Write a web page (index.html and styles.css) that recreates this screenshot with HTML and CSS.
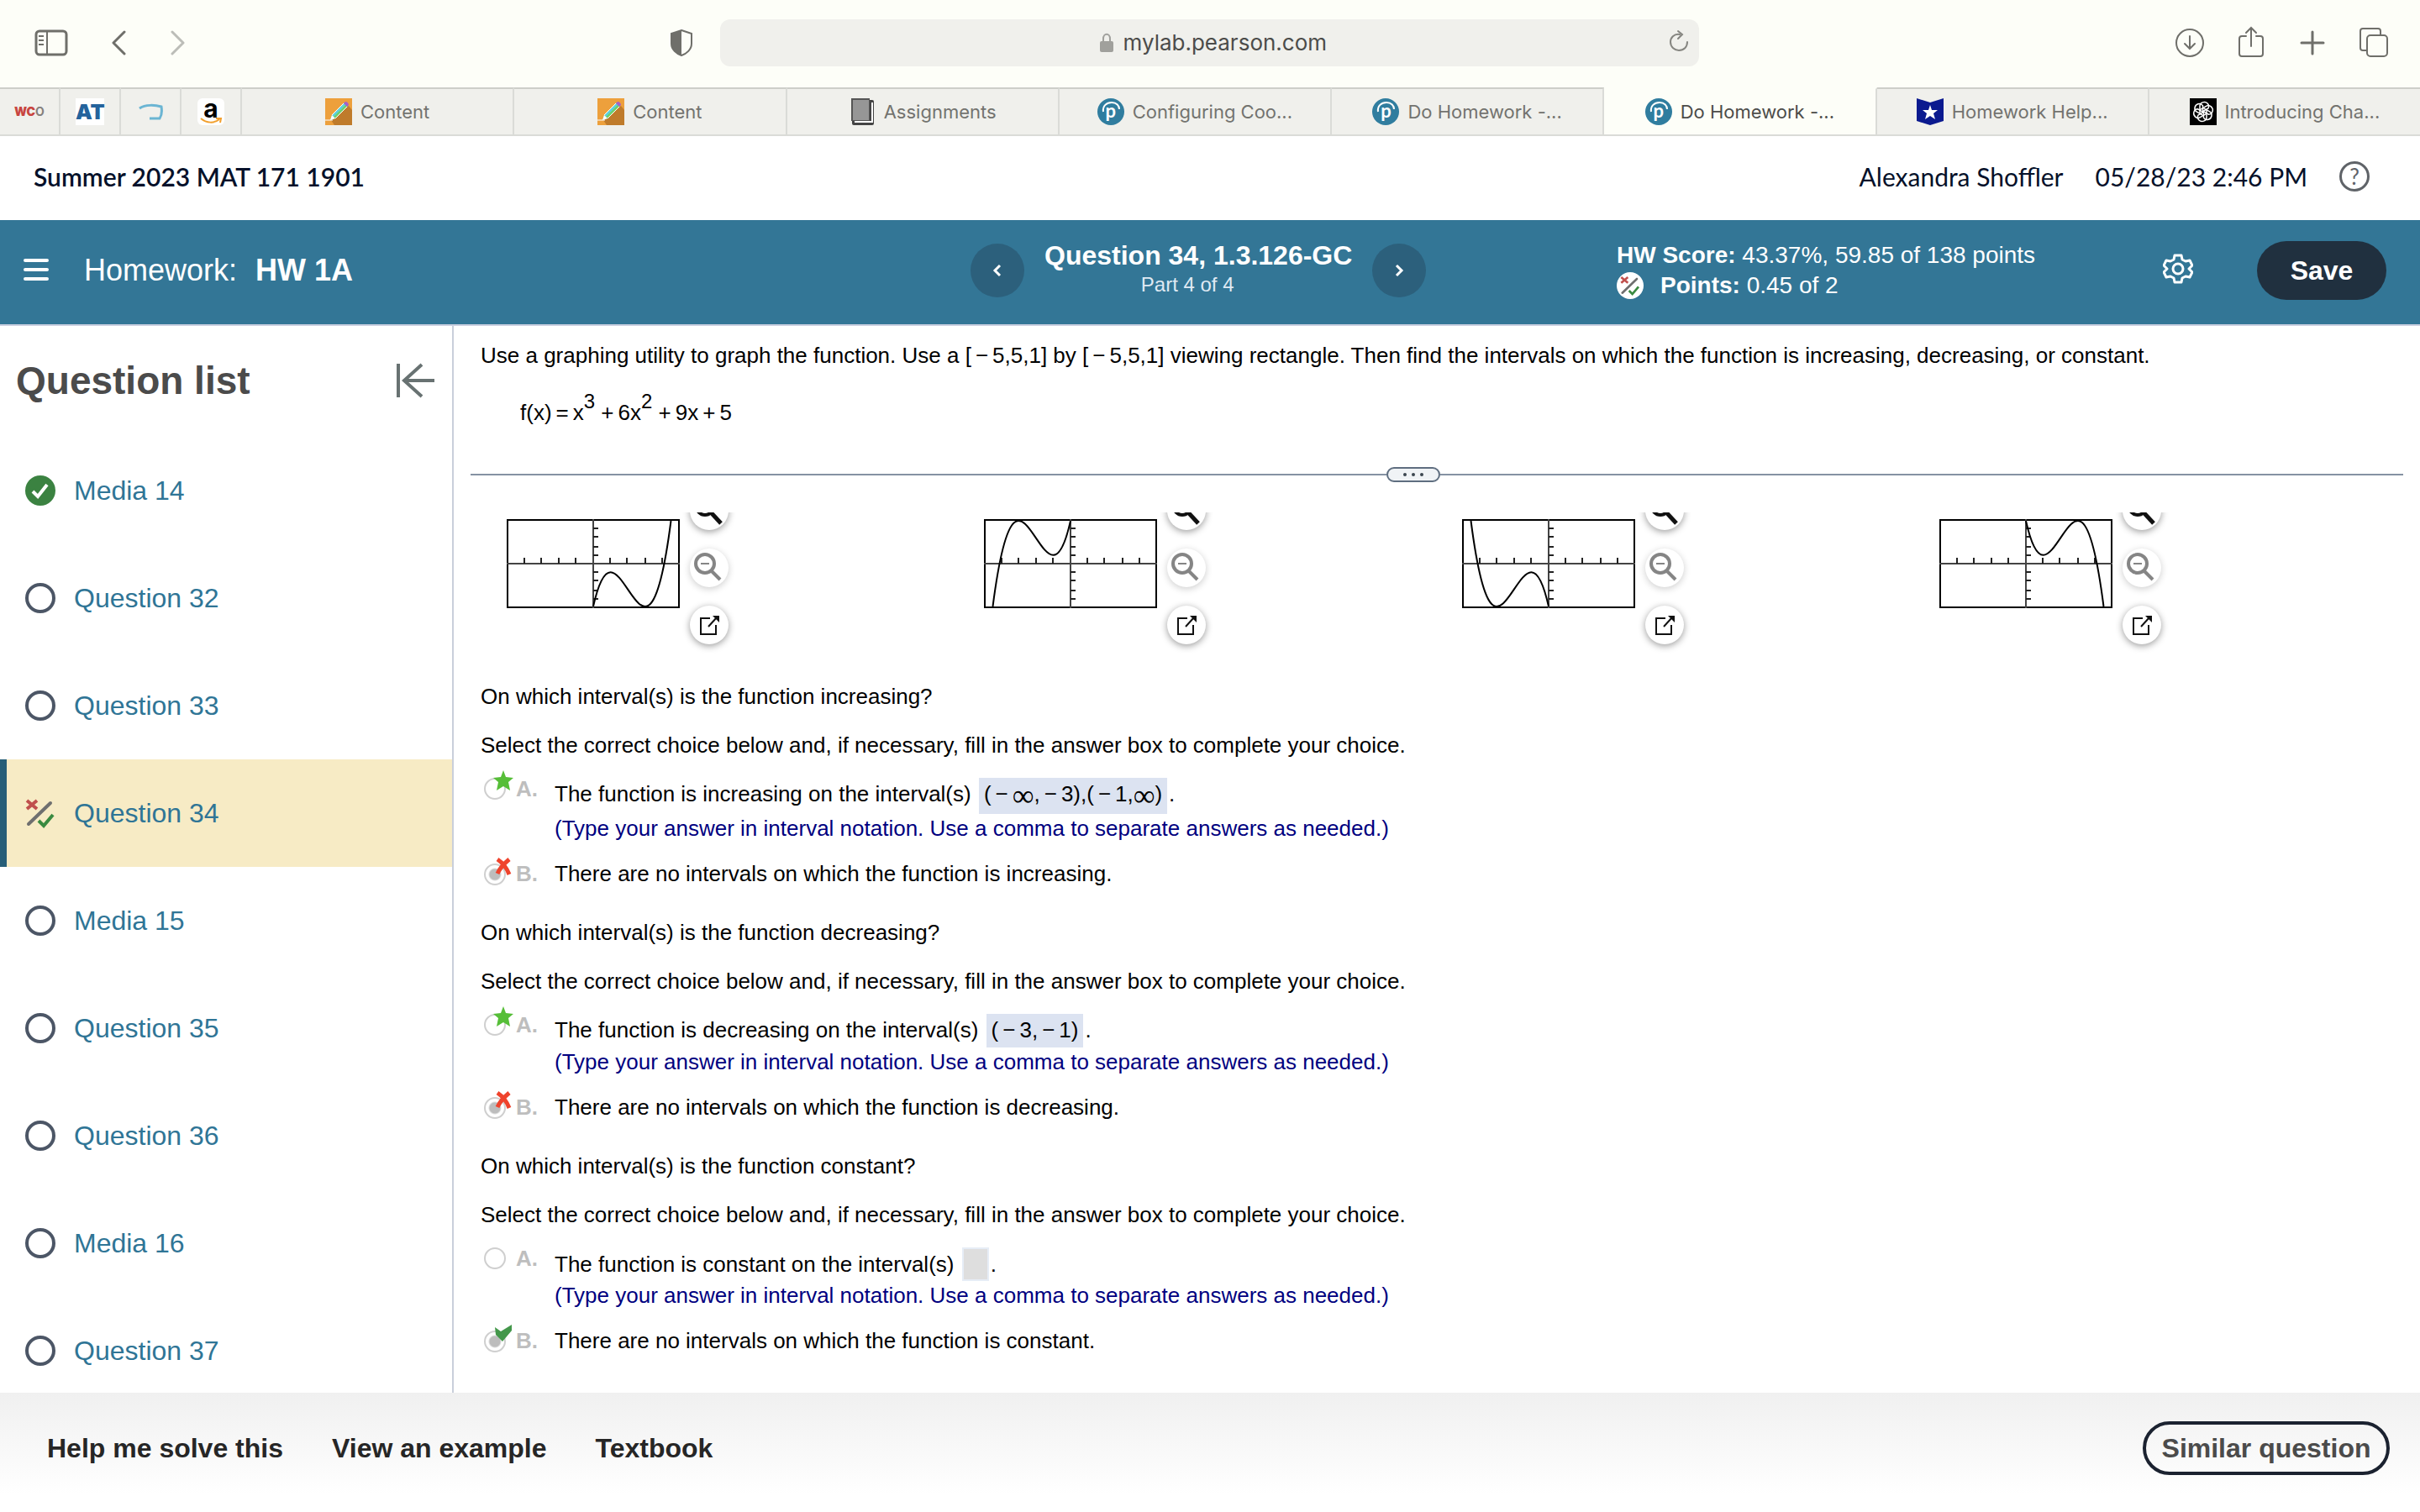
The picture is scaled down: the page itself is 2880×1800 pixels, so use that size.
FILE: index.html
```html
<!DOCTYPE html>
<html lang="en">
  <head>
    <meta charset="utf-8" />
    <title>Do Homework - HW 1A</title>
    <meta name="viewport" content="width=device-width, initial-scale=1.0" />
    <link rel="stylesheet" href="styles.css">
  </head>
  <body>
    <!-- Shared icons -->
    <svg class="sprite" aria-hidden="true">
      <symbol id="pencil" viewBox="0 0 32 32">
        <rect width="32" height="32" fill="#eda03c" />
        <path d="M7 26L28 9L32 14V32H11Z" fill="#bf7b2b" />
        <path d="M8 20L23 5L27 9L12 24L6 26Z" fill="#5fd0dc" />
        <path d="M10 22L25 7L27 9L12 24Z" fill="#6fd06c" />
        <path d="M8 20L12 24L6 26Z" fill="#fff" />
        <path d="M22 6L24 4C26 4 28 6 28 8L26 10Z" fill="#a560c8" />
        <path d="M8 20L22 6M12 24L26 10M0 26H9" stroke="#fff" stroke-width="1" />
      </symbol>
      <symbol id="arc" viewBox="0 0 32 32">
        <path d="M7 16C6 9 11 5 17 5C23 5 26 9 26 13" fill="none" stroke="#fff" stroke-width="2" />
      </symbol>
      <symbol id="partial" viewBox="0 0 36 36">
        <path d="M2 3L14 13M14 3L2 13" stroke="#c0504d" stroke-width="4" />
        <path d="M4 31L30 6" stroke="#6f6f6f" stroke-width="4" stroke-linecap="round" />
        <path d="M16 27L22 33L33 20" fill="none" stroke="#3a8a40" stroke-width="4" />
      </symbol>
      <symbol id="zoom-in" viewBox="0 0 46 46">
        <circle cx="18" cy="18" r="10" fill="none" stroke="#111" stroke-width="4" />
        <path d="M25 25L37 38" stroke="#111" stroke-width="5" />
        <path d="M13 18H23M18 13V23" stroke="#111" stroke-width="2" />
      </symbol>
      <symbol id="zoom-out" viewBox="0 0 46 46">
        <circle cx="18" cy="18" r="11" fill="none" stroke="#858585" stroke-width="4" />
        <path d="M25 26L36 37" stroke="#858585" stroke-width="4" />
        <path d="M13 18H23" stroke="#858585" stroke-width="2" />
      </symbol>
      <symbol id="pop-out" viewBox="0 0 46 46">
        <path d="M24 15H13V34H31V23" fill="none" stroke="#111" stroke-width="2" />
        <path d="M22 25L32 14" stroke="#111" stroke-width="2" />
        <path d="M27 12H35V20Z" fill="#111" />
      </symbol>
      <symbol id="axes" viewBox="0 0 206 106">
        <rect x="1" y="1" width="204" height="104" fill="none" stroke="#000" stroke-width="2" />
        <path d="M103 0V106M0 53H206" stroke="#444" stroke-width="2" />
        <path d="M21 46V53M41 46V53M62 46V53M82 46V53M123 46V53M143 46V53M165 46V53M185 46V53" stroke="#222" stroke-width="2" />
        <path d="M103 11H109M103 21H109M103 33H109M103 43H109M103 63H109M103 73H109M103 85H109M103 95H109" stroke="#222" stroke-width="2" />
      </symbol>
      <symbol id="star" viewBox="0 0 26 26">
        <path d="M13 1L16 9L25 10L19 15L21 25L13 20L5 25L7 15L1 10L10 9Z" fill="#56be38" />
      </symbol>
      <symbol id="wrong" viewBox="0 0 26 26">
        <path d="M6 4C12 8 17 14 20 22M20 4C14 9 9 14 6 21" fill="none" stroke="#ef432c" stroke-width="5" />
      </symbol>
      <symbol id="right" viewBox="0 0 26 26">
        <path d="M3 5L10 10L23 2V9L12 22L4 14Z" fill="#43974a" />
      </symbol>
    </svg>

    <!-- Browser toolbar -->
    <div class="toolbar">
      <div class="toolbar-left">
        <button class="tool" aria-label="Sidebar">
          <svg class="icon-panel" viewBox="0 0 40 32" fill="none" stroke="#6f6f6a" stroke-width="3">
            <rect x="2" y="2" width="36" height="28" rx="4" />
            <path d="M15 2V30M5 8H11M5 13H11M5 18H11" stroke-width="2" />
          </svg>
        </button>
        <button class="tool tool-back" aria-label="Back">
          <svg class="icon-arrow" viewBox="0 0 18 32" fill="none" stroke="#6f6f6a" stroke-width="3" stroke-linecap="round" stroke-linejoin="round">
            <path d="M16 3L3 16L16 29" />
          </svg>
        </button>
        <button class="tool tool-forward" aria-label="Forward">
          <svg class="icon-arrow" viewBox="0 0 18 32" fill="none" stroke="#bcbdb8" stroke-width="3" stroke-linecap="round" stroke-linejoin="round">
            <path d="M2 3L15 16L2 29" />
          </svg>
        </button>
        <button class="tool tool-shield" aria-label="Privacy report">
          <svg class="icon-shield" viewBox="0 0 28 34">
            <path d="M14 2L26 6V18C26 25 20 30 14 32C8 30 2 25 2 18V6Z" fill="none" stroke="#6f6f6a" stroke-width="2" />
            <path d="M14 2V32C8 30 2 25 2 18V6Z" fill="#6f6f6a" />
          </svg>
        </button>
      </div>
      <div class="address">
        <svg class="icon-lock" viewBox="0 0 16 24">
          <path d="M4 11V7C4 0 12 0 12 7V11" fill="none" stroke="#a0a09c" stroke-width="2" />
          <rect y="10" width="16" height="13" rx="2" fill="#a0a09c" />
        </svg>
        <input class="address-input" type="text" value="mylab.pearson.com" aria-label="Address" />
        <button class="tool tool-reload" aria-label="Reload">
          <svg class="icon-reload" viewBox="0 0 24 28" fill="none" stroke="#858580" stroke-width="2" stroke-linecap="round">
            <path d="M13 6C6 5 2 10 2 15C2 21 7 25 12 25C18 25 22 21 22 15" />
            <path d="M11 2L16 6L11 11" />
          </svg>
        </button>
      </div>
      <div class="toolbar-right">
        <button class="tool" aria-label="Downloads">
          <svg class="icon-tool" viewBox="0 0 36 40" fill="none" stroke="#6f6f6a" stroke-width="2" stroke-linecap="round">
            <circle cx="18" cy="20" r="16" />
            <path d="M18 12V27M12 21L18 27L24 21" />
          </svg>
        </button>
        <button class="tool" aria-label="Share">
          <svg class="icon-tool" viewBox="0 0 36 40" fill="none" stroke="#6f6f6a" stroke-width="2" stroke-linecap="round">
            <path d="M12 12H7Q4 12 4 15V33Q4 36 7 36H29Q32 36 32 33V15Q32 12 29 12H24" />
            <path d="M18 24V2M12 8L18 2L24 8" />
          </svg>
        </button>
        <button class="tool" aria-label="New tab">
          <svg class="icon-tool" viewBox="0 0 36 40" fill="none" stroke="#6f6f6a" stroke-width="3" stroke-linecap="round">
            <path d="M5 20H31M18 7V33" />
          </svg>
        </button>
        <button class="tool" aria-label="Tab overview">
          <svg class="icon-tool" viewBox="0 0 36 40" fill="none" stroke="#6f6f6a" stroke-width="2">
            <path d="M9 29H5Q2 29 2 26V6Q2 3 5 3H23Q26 3 26 6V11" />
            <rect x="10" y="11" width="24" height="25" rx="4" />
          </svg>
        </button>
      </div>
    </div>

    <!-- Browser tabs -->
    <nav class="tabs">
      <a class="tab tab-pinned fav-wco" href="#"><span><b>WC</b>O</span></a>
      <a class="tab tab-pinned" href="#"><span class="fav-at">AT</span></a>
      <a class="tab tab-pinned" href="#" aria-label="Pinned tab">
        <svg class="favicon" viewBox="0 0 32 32">
          <path d="M3 12C10 7 22 8 29 10C30 16 29 21 27 24H15" fill="none" stroke="#6bb5d3" stroke-width="3" />
        </svg>
      </a>
      <a class="tab tab-pinned" href="#">
        <span class="fav-amazon">a
          <svg class="smile" viewBox="0 0 28 8"><path d="M2 1C9 7 18 7 24 2M20 1H26L25 6" fill="none" stroke="#f2a02e" stroke-width="2" /></svg>
        </span>
      </a>
      <a class="tab" href="#"><svg class="favicon"><use href="#pencil" /></svg>Content</a>
      <a class="tab" href="#"><svg class="favicon"><use href="#pencil" /></svg>Content</a>
      <a class="tab" href="#">
        <svg class="favicon" viewBox="0 0 32 32">
          <rect x="4" y="2" width="26" height="30" rx="2" fill="#444" />
          <path d="M7 28H28V5" fill="none" stroke="#fff" stroke-width="2" />
          <rect x="3" width="22" height="27" fill="#555" />
          <rect x="5" y="2" width="19" height="24" fill="#969696" />
        </svg>Assignments</a>
      <a class="tab" href="#"><span class="fav-pearson">p<svg class="arc"><use href="#arc" /></svg></span>Configuring Coo...</a>
      <a class="tab" href="#"><span class="fav-pearson">p<svg class="arc"><use href="#arc" /></svg></span>Do Homework -...</a>
      <a class="tab tab-active" href="#"><span class="fav-pearson">p<svg class="arc"><use href="#arc" /></svg></span>Do Homework -...</a>
      <a class="tab" href="#">
        <svg class="favicon" viewBox="0 0 32 32">
          <path d="M0 0L16 5L32 0V27L16 32L0 27Z" fill="#0b1a8f" />
          <path d="M16 8L18 14H25L20 18L22 25L16 21L10 25L12 18L7 14H14Z" fill="#fff" />
        </svg>Homework Help...</a>
      <a class="tab" href="#">
        <svg class="favicon" viewBox="0 0 32 32">
          <rect width="32" height="32" fill="#000" />
          <g fill="none" stroke="#fff" stroke-width="1.5">
            <path id="petal" d="M12 18V9C12 5 18 3 21 6C23 8 23 10 22 12L15 16" />
            <use href="#petal" transform="rotate(60 16 16)" />
            <use href="#petal" transform="rotate(120 16 16)" />
            <use href="#petal" transform="rotate(180 16 16)" />
            <use href="#petal" transform="rotate(240 16 16)" />
            <use href="#petal" transform="rotate(300 16 16)" />
          </g>
        </svg>Introducing Cha...</a>
    </nav>

    <!-- Course header -->
    <header class="course">
      <h1 class="course-name">Summer 2023 MAT 171 1901</h1>
      <span>Alexandra Shoffler</span>
      <span>05/28/23 2:46 PM</span>
      <button class="help" aria-label="Help">?</button>
    </header>

    <!-- Assignment bar -->
    <div class="bar">
      <div class="bar-title">
        <button class="menu" aria-label="Menu">
          <svg class="icon-menu" viewBox="0 0 30 28" stroke="#fff" stroke-width="4" stroke-linecap="round">
            <path d="M2 2H28M2 13H28M2 24H28" />
          </svg>
        </button>
        <span>Homework:</span>
        <strong>HW 1A</strong>
      </div>
      <div class="bar-question">
        <button class="step" aria-label="Previous question">
          <svg class="icon-step" viewBox="0 0 16 18"><path d="M11 3L5 9L11 15" fill="none" stroke="#fff" stroke-width="3" /></svg>
        </button>
        <div class="bar-heading">
          <h2>Question 34, 1.3.126-GC</h2>
          <p>Part 4 of 4</p>
        </div>
        <button class="step" aria-label="Next question">
          <svg class="icon-step" viewBox="0 0 16 18"><path d="M5 3L11 9L5 15" fill="none" stroke="#fff" stroke-width="3" /></svg>
        </button>
      </div>
      <div class="bar-score">
        <p><strong>HW Score:</strong> 43.37%, 59.85 of 138 points</p>
        <p class="points">
          <span class="badge"><svg class="icon-badge"><use href="#partial" /></svg></span>
          <span><strong>Points:</strong> 0.45 of 2</span>
        </p>
      </div>
      <div class="bar-actions">
        <button class="gear" aria-label="Settings">
          <svg class="icon-gear" viewBox="0 0 36 36" fill="none" stroke="#fff" stroke-width="3" stroke-linejoin="round">
            <path d="M14 2H22L23 7L27 9L32 8L35 14L31 18L35 22L32 28L27 27L23 29L22 34H14L13 29L9 27L4 28L1 22L5 18L1 14L4 8L9 9L13 7Z" />
            <circle cx="18" cy="18" r="6" />
          </svg>
        </button>
        <button class="save">Save</button>
      </div>
    </div>

    <div class="workspace">
      <!-- Question list -->
      <aside class="sidebar">
        <div class="sidebar-header">
          <h2>Question list</h2>
          <button class="collapse" aria-label="Collapse list">
            <svg class="icon-collapse" viewBox="0 0 46 42" fill="none" stroke="#687272" stroke-width="4">
              <path d="M3 1V41M10 21H46M31 2L10 21L31 40" />
            </svg>
          </button>
        </div>
        <ul class="questions">
          <li>
            <a class="question" href="#">
              <svg class="status" viewBox="0 0 36 36">
                <circle cx="18" cy="18" r="18" fill="#3b8241" />
                <path d="M9 19L15 25L26 11" fill="none" stroke="#fff" stroke-width="4" />
              </svg>Media 14</a>
          </li>
          <li><a class="question" href="#"><span class="status open"></span>Question 32</a></li>
          <li><a class="question" href="#"><span class="status open"></span>Question 33</a></li>
          <li><a class="question current" href="#"><svg class="status"><use href="#partial" /></svg>Question 34</a></li>
          <li><a class="question" href="#"><span class="status open"></span>Media 15</a></li>
          <li><a class="question" href="#"><span class="status open"></span>Question 35</a></li>
          <li><a class="question" href="#"><span class="status open"></span>Question 36</a></li>
          <li><a class="question" href="#"><span class="status open"></span>Media 16</a></li>
          <li><a class="question" href="#"><span class="status open"></span>Question 37</a></li>
        </ul>
      </aside>

      <main class="main">
        <div class="prompt">
          <p>Use a graphing utility to graph the function. Use a [<i class="op">−</i>5,5,1] by [<i class="op">−</i>5,5,1] viewing rectangle. Then find the intervals on which the function is increasing, decreasing, or constant.</p>
          <p class="formula">f(x)<i class="op">=</i>x<sup>3</sup> <i class="op op-after">+</i>6x<sup>2</sup> <i class="op op-after">+</i>9x<i class="op">+</i>5</p>
        </div>

        <div class="divider">
          <button class="handle" aria-label="Resize question"><i></i><i></i><i></i></button>
        </div>

        <!-- Answer graphs, scrolled partly under the divider -->
        <div class="graphs">
          <div class="graph">
            <svg class="plot" viewBox="0 0 206 106">
              <use href="#axes" />
              <path d="M103 104C133.8 -33.5 164.7 240.7 195.5 2" fill="none" stroke="#000" stroke-width="2" />
            </svg>
            <div class="graph-tools">
              <button class="round" aria-label="Zoom in"><svg class="icon-round"><use href="#zoom-in" /></svg></button>
              <button class="round faint" aria-label="Zoom out"><svg class="icon-round"><use href="#zoom-out" /></svg></button>
              <button class="round" aria-label="Open graph"><svg class="icon-round"><use href="#pop-out" /></svg></button>
            </div>
          </div>
          <div class="graph">
            <svg class="plot" viewBox="0 0 206 106">
              <use href="#axes" />
              <path d="M103 2C72.2 139.5 41.3 -134.7 10.5 104" fill="none" stroke="#000" stroke-width="2" />
            </svg>
            <div class="graph-tools">
              <button class="round" aria-label="Zoom in"><svg class="icon-round"><use href="#zoom-in" /></svg></button>
              <button class="round faint" aria-label="Zoom out"><svg class="icon-round"><use href="#zoom-out" /></svg></button>
              <button class="round" aria-label="Open graph"><svg class="icon-round"><use href="#pop-out" /></svg></button>
            </div>
          </div>
          <div class="graph">
            <svg class="plot" viewBox="0 0 206 106">
              <use href="#axes" />
              <path d="M103 104C72.2 -33.5 41.3 240.7 10.5 2" fill="none" stroke="#000" stroke-width="2" />
            </svg>
            <div class="graph-tools">
              <button class="round" aria-label="Zoom in"><svg class="icon-round"><use href="#zoom-in" /></svg></button>
              <button class="round faint" aria-label="Zoom out"><svg class="icon-round"><use href="#zoom-out" /></svg></button>
              <button class="round" aria-label="Open graph"><svg class="icon-round"><use href="#pop-out" /></svg></button>
            </div>
          </div>
          <div class="graph">
            <svg class="plot" viewBox="0 0 206 106">
              <use href="#axes" />
              <path d="M103 2C133.8 139.5 164.7 -134.7 195.5 104" fill="none" stroke="#000" stroke-width="2" />
            </svg>
            <div class="graph-tools">
              <button class="round" aria-label="Zoom in"><svg class="icon-round"><use href="#zoom-in" /></svg></button>
              <button class="round faint" aria-label="Zoom out"><svg class="icon-round"><use href="#zoom-out" /></svg></button>
              <button class="round" aria-label="Open graph"><svg class="icon-round"><use href="#pop-out" /></svg></button>
            </div>
          </div>
        </div>

        <div class="parts">
          <section class="part">
            <p>On which interval(s) is the function increasing?</p>
            <p class="instruction">Select the correct choice below and, if necessary, fill in the answer box to complete your choice.</p>
            <div class="choice choice-fill">
              <span class="pick">
                <input type="radio" name="increasing" id="inc-a" disabled />
                <svg class="mark"><use href="#star" /></svg>
              </span>
              <label class="letter" for="inc-a">A.</label>
              <div>
                <p>The function is increasing on the interval(s) <span class="answer answer-tall">(<i class="op">−</i><i class="inf">∞</i>,<i class="op">−</i>3),(<i class="op">−</i>1,<i class="inf">∞</i>)</span>.</p>
                <p class="hint">(Type your answer in interval notation. Use a comma to separate answers as needed.)</p>
              </div>
            </div>
            <div class="choice">
              <span class="pick">
                <input type="radio" name="increasing" id="inc-b" checked disabled />
                <svg class="mark"><use href="#wrong" /></svg>
              </span>
              <label class="letter" for="inc-b">B.</label>
              <p>There are no intervals on which the function is increasing.</p>
            </div>
          </section>

          <section class="part">
            <p>On which interval(s) is the function decreasing?</p>
            <p class="instruction">Select the correct choice below and, if necessary, fill in the answer box to complete your choice.</p>
            <div class="choice choice-fill">
              <span class="pick">
                <input type="radio" name="decreasing" id="dec-a" disabled />
                <svg class="mark"><use href="#star" /></svg>
              </span>
              <label class="letter" for="dec-a">A.</label>
              <div>
                <p>The function is decreasing on the interval(s) <span class="answer">(<i class="op">−</i>3,<i class="op">−</i>1)</span>.</p>
                <p class="hint">(Type your answer in interval notation. Use a comma to separate answers as needed.)</p>
              </div>
            </div>
            <div class="choice">
              <span class="pick">
                <input type="radio" name="decreasing" id="dec-b" checked disabled />
                <svg class="mark"><use href="#wrong" /></svg>
              </span>
              <label class="letter" for="dec-b">B.</label>
              <p>There are no intervals on which the function is decreasing.</p>
            </div>
          </section>

          <section class="part">
            <p>On which interval(s) is the function constant?</p>
            <p class="instruction">Select the correct choice below and, if necessary, fill in the answer box to complete your choice.</p>
            <div class="choice choice-fill">
              <span class="pick"><input type="radio" name="constant" id="con-a" disabled /></span>
              <label class="letter" for="con-a">A.</label>
              <div>
                <p>The function is constant on the interval(s) <input class="answer-box" type="text" aria-label="Interval" disabled />.</p>
                <p class="hint">(Type your answer in interval notation. Use a comma to separate answers as needed.)</p>
              </div>
            </div>
            <div class="choice">
              <span class="pick">
                <input type="radio" name="constant" id="con-b" checked disabled />
                <svg class="mark"><use href="#right" /></svg>
              </span>
              <label class="letter" for="con-b">B.</label>
              <p>There are no intervals on which the function is constant.</p>
            </div>
          </section>
        </div>
      </main>
    </div>

    <footer class="footer">
      <button class="link">Help me solve this</button>
      <button class="link">View an example</button>
      <button class="link">Textbook</button>
      <button class="similar">Similar question</button>
    </footer>
  </body>
</html>
```

FILE: styles.css
```css
* {
  box-sizing: border-box;
}
body {
  margin: 0;
  height: 100vh;
  display: flex;
  flex-direction: column;
  overflow: hidden;
  background: #fff;
  color: #000;
  font-family: "Liberation Sans", Arial, sans-serif;
  font-size: 26px;
  line-height: 30px;
}
h1,
h2,
p,
ul {
  margin: 0;
  padding: 0;
}
svg {
  display: block;
  flex: none;
}
button {
  background: none;
  border: none;
  padding: 0;
  font-family: inherit;
  cursor: pointer;
}
a {
  text-decoration: none;
}
.sprite {
  position: absolute;
  width: 0;
  height: 0;
}

/* Browser toolbar */
.toolbar {
  display: grid;
  grid-template-columns: 857fr 1165fr 858fr;
  align-items: center;
  height: 104px;
  flex: none;
  padding-bottom: 2px;
  background: #fdfef8;
  font-family: Inter, sans-serif;
}
.toolbar-left {
  display: flex;
  align-items: center;
  padding: 0 32px 0 41px;
}
.tool-back {
  margin-left: 51px;
}
.tool-forward {
  margin-left: 53px;
}
.tool-shield {
  margin-left: auto;
}
.icon-panel {
  width: 40px;
  height: 32px;
}
.icon-arrow {
  width: 18px;
  height: 32px;
}
.icon-shield {
  width: 28px;
  height: 34px;
}
.address {
  position: relative;
  display: flex;
  align-items: center;
  justify-content: center;
  gap: 12px;
  height: 56px;
  padding-left: 8px;
  border-radius: 12px;
  background: #f0f0ec;
}
.address-input {
  width: 242px;
  padding: 0;
  border: none;
  background: none;
  color: #4c4c4a;
  font: inherit;
}
.icon-lock {
  width: 16px;
  height: 24px;
}
.tool-reload {
  position: absolute;
  right: 12px;
  top: 12px;
}
.icon-reload {
  width: 24px;
  height: 28px;
}
.toolbar-right {
  display: flex;
  justify-content: flex-end;
  gap: 37px;
  padding-right: 37px;
}
.icon-tool {
  width: 36px;
  height: 40px;
}

/* Tabs */
.tabs {
  display: flex;
  height: 58px;
  flex: none;
  border-bottom: 2px solid #dadbd7;
  font-family: Inter, sans-serif;
  font-size: 22px;
}
.tab {
  display: flex;
  flex: 1 1 0;
  align-items: center;
  justify-content: center;
  gap: 10px;
  border-right: 2px solid #dadbd7;
  border-top: 2px solid #cdcec9;
  background: #f0f0ec;
  color: #73736f;
  white-space: nowrap;
}
.tab:last-child {
  border-right: none;
}
.tab-pinned {
  flex: 0 0 72px;
}
.tab-active {
  background: #fdfef8;
  border-top-color: #fdfef8;
  color: #4c4c4a;
}
.favicon {
  width: 32px;
  height: 32px;
}
.fav-wco {
  color: #85807c;
  font-size: 14px;
  font-weight: 700;
}
.fav-wco b {
  color: #c8453f;
}
.fav-at {
  width: 34px;
  background: #fff;
  color: #24639c;
  font-size: 25px;
  font-weight: 900;
  line-height: 32px;
  text-align: center;
}
.fav-amazon {
  position: relative;
  width: 32px;
  height: 32px;
  border-radius: 6px;
  background: #fff;
  color: #000;
  font-size: 30px;
  font-weight: 700;
  line-height: 24px;
  text-align: center;
}
.smile {
  position: absolute;
  left: 2px;
  bottom: 1px;
  width: 28px;
  height: 8px;
}
.fav-pearson {
  position: relative;
  width: 32px;
  height: 32px;
  border-radius: 50%;
  background: #307d9f;
  color: #fff;
  font-family: Lato, sans-serif;
  font-size: 22px;
  font-weight: 700;
  line-height: 30px;
  text-align: center;
}
.arc {
  position: absolute;
  left: 0;
  top: 0;
  width: 32px;
  height: 32px;
}

/* Course header */
.course {
  display: flex;
  align-items: center;
  gap: 38px;
  height: 100px;
  flex: none;
  padding: 0 60px 4px 40px;
  color: #05112a;
  font-family: Lato, sans-serif;
  font-size: 30px;
}
.course-name {
  margin-right: auto;
  font-size: 30px;
  font-weight: 600;
}
.help {
  width: 36px;
  height: 36px;
  border: 3px solid #5f6368;
  border-radius: 50%;
  color: #5f6368;
  font-size: 26px;
  line-height: 30px;
}

/* Assignment bar */
.bar {
  display: grid;
  grid-template-columns: 1155fr 769fr 650fr 306fr;
  align-items: center;
  height: 126px;
  flex: none;
  padding-bottom: 4px;
  border-bottom: 2px solid #c9cfdf;
  background: #337696;
  color: #fff;
}
.bar-title {
  display: flex;
  align-items: center;
  padding-left: 28px;
  gap: 22px;
  font-size: 36px;
  line-height: 40px;
}
.menu {
  margin-right: 20px;
}
.icon-menu {
  width: 30px;
  height: 28px;
}
.bar-question {
  display: flex;
  align-items: center;
  gap: 24px;
}
.step {
  display: flex;
  align-items: center;
  justify-content: center;
  width: 64px;
  height: 64px;
  border-radius: 50%;
  background: #2c607c;
}
.icon-step {
  width: 16px;
  height: 18px;
}
.bar-heading {
  text-align: center;
}
.bar-heading h2 {
  font-size: 32px;
  line-height: 34px;
}
.bar-heading p {
  padding-right: 26px;
  color: #dfe9f3;
  font-size: 24px;
  line-height: 36px;
}
.bar-score {
  font-size: 28px;
  line-height: 36px;
}
.points {
  display: flex;
  align-items: center;
  gap: 20px;
}
.badge {
  display: flex;
  align-items: center;
  justify-content: center;
  width: 32px;
  height: 32px;
  border-radius: 50%;
  background: #fff;
}
.icon-badge {
  width: 24px;
  height: 24px;
}
.bar-actions {
  display: flex;
  align-items: center;
  justify-content: space-between;
  padding-right: 40px;
}
.gear {
  padding-bottom: 4px;
}
.icon-gear {
  width: 36px;
  height: 36px;
}
.save {
  width: 154px;
  height: 70px;
  border-radius: 35px;
  background: #20303f;
  color: #fff;
  font-size: 32px;
  font-weight: 700;
}

/* Question list */
.workspace {
  display: flex;
  flex: 1;
  min-height: 0;
  overflow: hidden;
}
.sidebar {
  width: 540px;
  flex: none;
  border-right: 2px solid #c9cfdb;
}
.sidebar-header {
  display: flex;
  align-items: center;
  justify-content: space-between;
  height: 132px;
  padding: 0 21px 2px 19px;
}
.sidebar-header h2 {
  color: #4b4b4b;
  font-size: 46px;
  line-height: 52px;
}
.icon-collapse {
  width: 46px;
  height: 42px;
}
.questions {
  list-style: none;
}
.question {
  display: flex;
  align-items: center;
  gap: 22px;
  height: 128px;
  padding-left: 22px;
  border-left: 8px solid transparent;
  color: #2f7596;
  font-size: 32px;
}
.current {
  border-left-color: #275e78;
  background: #f7ebc5;
}
.status {
  width: 36px;
  height: 36px;
  flex: none;
}
.open {
  border: 4px solid #4c5666;
  border-radius: 50%;
}

/* Question */
.main {
  flex: 1;
  min-width: 0;
}
.prompt {
  padding: 20px 32px 50px;
}
.op {
  margin: 0 5px;
  font-style: normal;
}
.op-after {
  margin-left: 0;
}
.formula {
  margin-top: 38px;
  padding-left: 47px;
}
.formula sup {
  font-size: 24px;
  line-height: 0;
  vertical-align: 14px;
}
.divider {
  display: flex;
  align-items: center;
  height: 18px;
  margin: 0 20px 36px;
}
.divider::before,
.divider::after {
  content: "";
  flex: 1090;
  height: 2px;
  background: #8592a3;
}
.divider::after {
  flex: 1146;
}
.handle {
  display: flex;
  align-items: center;
  justify-content: center;
  gap: 6px;
  width: 64px;
  height: 18px;
  border: 2px solid #5f6e80;
  border-radius: 9px;
  background: #f0f3f6;
}
.handle i {
  width: 4px;
  height: 4px;
  border-radius: 50%;
  background: #3c4650;
}
.graphs {
  display: grid;
  grid-template-columns: repeat(4, 1fr);
  padding: 0 4px 20px 63px;
  margin-bottom: 27px;
  overflow: hidden;
}
.graph {
  display: flex;
  align-items: flex-start;
  gap: 12px;
}
.plot {
  width: 206px;
  height: 106px;
  margin-top: 8px;
}
.graph-tools {
  display: flex;
  flex-direction: column;
  gap: 22px;
  margin-top: -25px;
}
.round {
  width: 46px;
  height: 46px;
  border-radius: 50%;
  background: #fff;
  box-shadow: 0 2px 8px rgba(0, 0, 0, 0.4);
}
.faint {
  box-shadow: 0 2px 8px rgba(0, 0, 0, 0.2);
}
.icon-round {
  width: 46px;
  height: 46px;
}

/* Answer parts */
.parts {
  display: flex;
  flex-direction: column;
  gap: 40px;
  padding: 0 32px;
}
.instruction {
  margin-top: 28px;
}
.choice {
  display: grid;
  grid-template-columns: 38px 46px 1fr;
  align-items: start;
  margin-top: 24px;
  padding-left: 4px;
}
.pick {
  position: relative;
  display: flex;
  padding-top: 3px;
}
.choice-fill .pick {
  padding-top: 0;
}
.pick input {
  appearance: none;
  width: 26px;
  height: 26px;
  margin: 0;
  border: 2px solid #cfcfcf;
  border-radius: 50%;
  background: #fff;
}
.pick input:checked {
  background: radial-gradient(circle, #bdbdbd 6px, #fff 8px);
}
.mark {
  position: absolute;
  left: 10px;
  top: -6px;
  width: 26px;
  height: 26px;
}
.choice-fill .mark {
  top: -10px;
}
.letter {
  color: #bebebe;
  font-weight: 700;
}
.choice-fill .letter {
  line-height: 26px;
}
.answer {
  display: inline-block;
  margin: 0 2px;
  padding: 0 6px 2px;
  background: #dce3f1;
  line-height: 38px;
}
.answer-tall {
  padding-bottom: 4px;
}
.inf {
  font-family: "Liberation Serif", serif;
  font-size: 36px;
  font-style: normal;
  line-height: 1;
  vertical-align: -5px;
}
.answer-box {
  width: 32px;
  height: 40px;
  margin: 0 2px;
  padding: 0;
  border: 2px solid #e6edf6;
  background: #dedede;
  font: inherit;
}
.hint {
  margin-top: 2px;
  color: #00007f;
}

/* Footer */
.footer {
  display: flex;
  align-items: center;
  gap: 58px;
  height: 142px;
  flex: none;
  padding: 0 36px 10px 56px;
  background: linear-gradient(#f0f0f0, #fff 85%);
}
.link {
  color: #262626;
  font-size: 32px;
  font-weight: 700;
}
.similar {
  width: 294px;
  height: 64px;
  margin-left: auto;
  border: 4px solid #1b2230;
  border-radius: 32px;
  color: #4b4b4b;
  font-size: 32px;
  font-weight: 700;
}
```
